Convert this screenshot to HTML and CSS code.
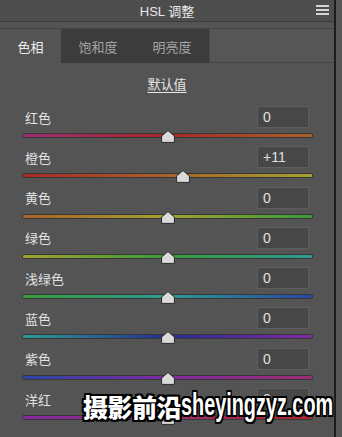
FILE: index.html
```html
<!DOCTYPE html>
<html>
<head lang="zh">
    <meta charset="UTF-8">
    <title>HSL 调整</title>
    <link rel="stylesheet" href="styles.css">
</head>
<body>
<div class="panel">
    <div class="title">
        <span>HSL 调整</span>
        <i class="menu"><b></b><b></b><b></b></i>
    </div>
    <div class="tabs">
        <span class="tab current">色相</span>
        <span class="tab">饱和度</span>
        <span class="tab">明亮度</span>
        <span class="tab-rest"></span>
    </div>
    <div class="reset"><u>默认值</u></div>

    <div class="row">
        <div class="head"><span>红色</span><span class="num">0</span></div>
        <div class="track red"><svg class="thumb" style="left:50%" width="14" height="13" viewBox="0 0 14 13"><path d="M7 .6 13.4 6v6.4H.6V6Z"/></svg></div>
    </div>
    <div class="row">
        <div class="head"><span>橙色</span><span class="num">+11</span></div>
        <div class="track orange"><svg class="thumb" style="left:55.5%" width="14" height="13" viewBox="0 0 14 13"><path d="M7 .6 13.4 6v6.4H.6V6Z"/></svg></div>
    </div>
    <div class="row">
        <div class="head"><span>黄色</span><span class="num">0</span></div>
        <div class="track yellow"><svg class="thumb" style="left:50%" width="14" height="13" viewBox="0 0 14 13"><path d="M7 .6 13.4 6v6.4H.6V6Z"/></svg></div>
    </div>
    <div class="row">
        <div class="head"><span>绿色</span><span class="num">0</span></div>
        <div class="track green"><svg class="thumb" style="left:50%" width="14" height="13" viewBox="0 0 14 13"><path d="M7 .6 13.4 6v6.4H.6V6Z"/></svg></div>
    </div>
    <div class="row">
        <div class="head"><span>浅绿色</span><span class="num">0</span></div>
        <div class="track aqua"><svg class="thumb" style="left:50%" width="14" height="13" viewBox="0 0 14 13"><path d="M7 .6 13.4 6v6.4H.6V6Z"/></svg></div>
    </div>
    <div class="row">
        <div class="head"><span>蓝色</span><span class="num">0</span></div>
        <div class="track blue"><svg class="thumb" style="left:50%" width="14" height="13" viewBox="0 0 14 13"><path d="M7 .6 13.4 6v6.4H.6V6Z"/></svg></div>
    </div>
    <div class="row">
        <div class="head"><span>紫色</span><span class="num">0</span></div>
        <div class="track purple"><svg class="thumb" style="left:50%" width="14" height="13" viewBox="0 0 14 13"><path d="M7 .6 13.4 6v6.4H.6V6Z"/></svg></div>
    </div>
    <div class="row">
        <div class="head"><span>洋红</span><span class="num">0</span></div>
        <div class="track magenta"><svg class="thumb" style="left:50%" width="14" height="13" viewBox="0 0 14 13"><path d="M7 .6 13.4 6v6.4H.6V6Z"/></svg></div>
    </div>
</div>

<div class="mark"><span class="cn">摄影前沿</span><span class="en">sheyingzyz.com</span></div>
</body>
</html>
```

FILE: styles.css
```css
* {
    margin: 0;
    padding: 0;
    box-sizing: border-box;
}

body {
    width: 342px;
    height: 437px;
    overflow: hidden;
    position: relative;
    background-color: #565656;
    font-family: "Liberation Sans", "Noto Sans CJK SC", sans-serif;
    font-size: 13px;
    color: #e2e2e2;
}

.panel {
    width: 336px;
    height: 437px;
    background-color: #545454;
    border-right: 2px solid #1c1c1c;
}

/* 标题栏 */
.title {
    height: 22px;
    background-color: #4d4d4d;
    border-bottom: 1px solid #3c3c3c;
    display: flex;
    align-items: center;
    justify-content: center;
    position: relative;
    color: #e8e8e8;
}
.menu {
    position: absolute;
    right: 5px;
    top: 5px;
    width: 13px;
    display: flex;
    flex-direction: column;
    gap: 2px;
}
.menu b {
    height: 2px;
    background-color: #d4d4d4;
}

/* 选项卡 */
.tabs {
    margin-top: 6px;
    height: 35px;
    display: flex;
    border-top: 1px solid #444;
}
.tab {
    width: 74px;
    background-color: #3c3c3c;
    color: #a4a4a4;
    display: flex;
    align-items: center;
    justify-content: center;
    padding-top: 1px;
}
.tab.current {
    width: 61px;
    background-color: #545454;
    color: #ececec;
}
.tab-rest {
    flex: 1;
    border-bottom: 1px solid #464646;
    border-left: 1px solid #4a4a4a;
    background-color: #565656;
}

.reset {
    height: 43px;
    display: flex;
    align-items: center;
    justify-content: center;
    padding-bottom: 2px;
}
.reset u {
    text-underline-offset: 3px;
    color: #e6e6e6;
}

/* 滑块行 */
.row {
    height: 40.3px;
}
.head {
    height: 22px;
    display: flex;
    align-items: center;
    justify-content: space-between;
    padding-left: 25px;
    padding-right: 25px;
}
.num {
    width: 52px;
    height: 22px;
    line-height: 20px;
    padding-left: 5px;
    background-color: #474747;
    border: 1px solid #5e5e5e;
    color: #e0e0e0;
    font-size: 14px;
}
.track {
    position: relative;
    margin: 6px 0 0 23px;
    width: 289px;
    height: 3px;
    border-radius: 1px;
    box-shadow: 0 0 0 1px rgba(20, 20, 20, .45);
}
.thumb {
    position: absolute;
    top: -4px;
    margin-left: -7px;
    fill: #dadada;
    stroke: #2a2a2a;
    stroke-width: 1;
}

.red     { background: linear-gradient(to right, #9a2d72, #a82828 50%, #ab6228); }
.orange  { background: linear-gradient(to right, #a82828, #ab6228 50%, #a2a22e); }
.yellow  { background: linear-gradient(to right, #ab6228, #a2a22e 50%, #389c38); }
.green   { background: linear-gradient(to right, #a2a22e, #389c38 50%, #2c9c94); }
.aqua    { background: linear-gradient(to right, #389c38, #2c9c94 50%, #2a46a4); }
.blue    { background: linear-gradient(to right, #2c9c94, #262e92 50%, #8229a4); }
.purple  { background: linear-gradient(to right, #2a46a4, #8229a4 50%, #9a2d72); }
.magenta { background: linear-gradient(to right, #8229a4, #9a2d72 50%, #a82828); }

/* 水印 */
.mark {
    position: absolute;
    left: 83px;
    top: 390px;
    display: flex;
    align-items: center;
    white-space: nowrap;
    width: 260px;
    color: #fff;
    font-weight: bold;
    text-shadow: 2px 0 0 #000, -2px 0 0 #000, 0 2px 0 #000, 0 -2px 0 #000,
                 2px 2px 0 #000, -2px -2px 0 #000, 2px -2px 0 #000, -2px 2px 0 #000;
}
.mark .cn {
    flex-shrink: 0;
    font-family: "Noto Sans CJK SC", sans-serif;
    font-weight: 900;
    font-size: 25px;
    letter-spacing: -0.5px;
    line-height: 32px;
}
.mark .en {
    flex-shrink: 0;
    font-family: "Liberation Sans", sans-serif;
    font-size: 31px;
    line-height: 32px;
    display: inline-block;
    transform: scaleX(.64);
    transform-origin: left center;
    margin-top: -3px;
}
```
